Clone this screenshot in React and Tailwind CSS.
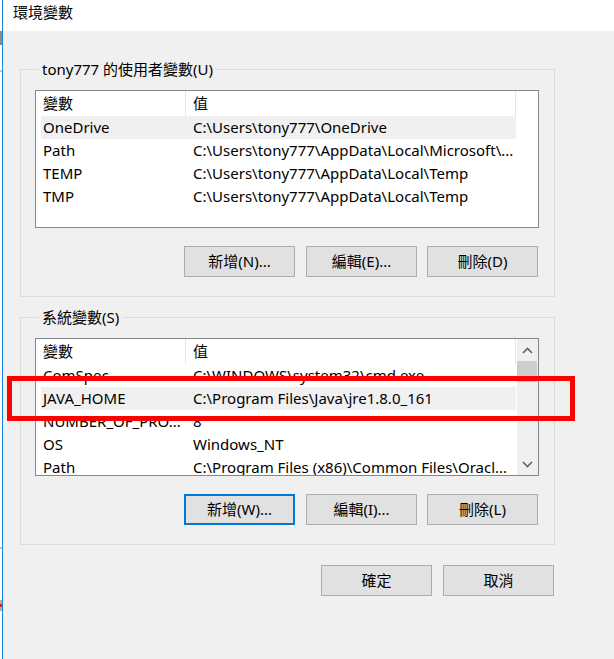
import React from "react";

const font = {
  fontFamily: '"Noto Sans", "Noto Sans CJK TC", sans-serif',
};

const userVars = [
  ["OneDrive", "C:\\Users\\tony777\\OneDrive", true],
  ["Path", "C:\\Users\\tony777\\AppData\\Local\\Microsoft\\..."],
  ["TEMP", "C:\\Users\\tony777\\AppData\\Local\\Temp"],
  ["TMP", "C:\\Users\\tony777\\AppData\\Local\\Temp"],
];

const sysVars = [
  ["ComSpec", "C:\\WINDOWS\\system32\\cmd.exe"],
  ["JAVA_HOME", "C:\\Program Files\\Java\\jre1.8.0_161", true],
  ["NUMBER_OF_PRO...", "8"],
  ["OS", "Windows_NT"],
  ["Path", "C:\\Program Files (x86)\\Common Files\\Oracl..."],
];

function Chevron({ up }) {
  return (
    <svg width="11" height="7" viewBox="0 0 11 7">
      <polyline
        points={up ? "1,6 5.5,1.5 10,6" : "1,1 5.5,5.5 10,1"}
        fill="none"
        stroke="#606060"
        strokeWidth="1.6"
      />
    </svg>
  );
}

function Btn({ children, primary, className = "" }) {
  return (
    <button
      className={
        "flex h-[31px] w-[111px] items-center justify-center bg-[#e1e1e1] text-[15px] text-black " +
        (primary ? "border-2 border-[#0078d7] " : "border border-[#adadad] ") +
        className
      }
    >
      {children}
    </button>
  );
}

function VarList({ rows, scroll }) {
  return (
    <div className="flex h-[138px] w-[504px] overflow-hidden border border-[#828790] bg-white">
      <div className="flex w-[481px] flex-col">
        {/* header */}
        <div className="flex h-[25px] shrink-0 items-center">
          <div className="h-full w-[150px] border-r border-[#e5e5e5] pl-[7px] leading-[25px]">變數</div>
          <div className="h-full w-[330px] border-r border-[#e5e5e5] pl-[7px] leading-[25px]">值</div>
        </div>
        {rows.map(([name, value, sel]) => (
          <div
            key={name + value}
            className={
              "ml-[5px] flex h-[23px] w-[475px] shrink-0 items-center leading-[23px] " +
              (sel ? "bg-[#f0f0f0]" : "")
            }
          >
            <div className="w-[145px] overflow-hidden whitespace-nowrap pl-[2px]">{name}</div>
            <div className="w-[330px] overflow-hidden whitespace-nowrap pl-[7px]">{value}</div>
          </div>
        ))}
      </div>
      {scroll && (
        <div className="flex w-[21px] flex-col bg-[#f0f0f0]">
          <div className="flex h-[22px] items-center justify-center">
            <Chevron up />
          </div>
          <div className="h-[21px] w-[20px] bg-[#cdcdcd]" />
          <div className="flex-1" />
          <div className="flex h-[22px] items-center justify-center">
            <Chevron />
          </div>
        </div>
      )}
    </div>
  );
}

function Group({ title, rows, scroll, buttons, className = "" }) {
  return (
    <fieldset className={"ml-[17px] w-[535px] border border-[#dcdcdc] pl-[14px] pr-[15px] pb-[19px] " + className}>
      <legend className="ml-[4px] px-[3px] text-[15px] leading-[20px]">{title}</legend>
      <div className="mt-[11px]">
        <VarList rows={rows} scroll={scroll} />
      </div>
      <div className="mt-[18px] flex justify-end pr-[1px]">
        <Btn primary={buttons[3]}>{buttons[0]}</Btn>
        <Btn className="ml-[11px]">{buttons[1]}</Btn>
        <Btn className="ml-[10px]">{buttons[2]}</Btn>
      </div>
    </fieldset>
  );
}

export default function App() {
  return (
    <div className="relative flex h-[659px] w-[614px] overflow-hidden bg-white text-[15px] text-black" style={font}>
      {/* background behind the window */}
      <div className="flex w-[2px] flex-col">
        <div className="h-[31px] bg-white" />
        <div className="h-[14px] bg-[#8a8a8a]" />
        <div className="h-[25px] bg-white" />
        <div className="h-[2px] bg-[#c8c8c8]" />
        <div className="h-[475px] bg-white" />
        <div className="h-[2px] bg-[#c8c8c8]" />
        <div className="h-[51px] bg-white" />
        <div className="h-[4px] bg-[#b0b0b0]" />
        <div className="h-[3px] bg-[#e02020]" />
        <div className="h-[4px] bg-[#b0b0b0]" />
        <div className="flex-1 bg-white" />
      </div>
      <div className="w-[1px] bg-[#1883d7]" />

      {/* window */}
      <div className="flex flex-1 flex-col">
        <div className="h-[31px] shrink-0 bg-white pl-[10px] pt-[2px] leading-[20px]">環境變數</div>
        <div className="flex-1 bg-[#f0f0f0] pt-[28px]">
          <Group
            title="tony777 的使用者變數(U)"
            rows={userVars}
            buttons={["新增(N)...", "編輯(E)...", "刪除(D)"]}
          />
          <Group
            className="mt-[10px]"
            title="系統變數(S)"
            rows={sysVars}
            scroll
            buttons={["新增(W)...", "編輯(I)...", "刪除(L)", true]}
          />
          <div className="mt-[20px] flex justify-end pr-[60px]">
            <Btn>確定</Btn>
            <Btn className="ml-[11px]">取消</Btn>
          </div>
        </div>
      </div>

      {/* red highlight drawn over the screenshot */}
      <div className="pointer-events-none absolute left-[7px] top-[376px] h-[45px] w-[568px] border-[5px] border-[#ff0000]" />
    </div>
  );
}
